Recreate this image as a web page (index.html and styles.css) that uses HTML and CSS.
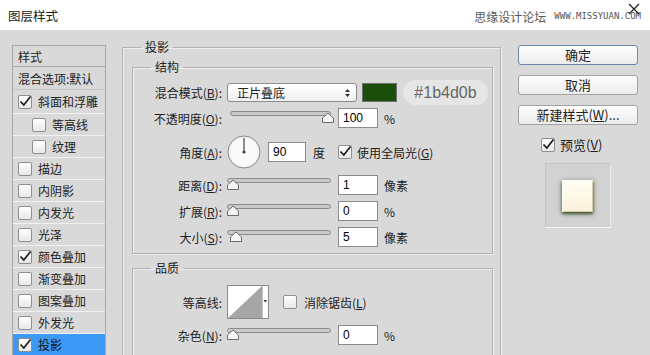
FILE: index.html
```html
<!DOCTYPE html>
<html lang="zh-CN">
<head>
    <meta charset="UTF-8">
    <meta name="viewport" content="width=device-width, initial-scale=1.0">
    <title>图层样式</title>
    <link rel="stylesheet" href="styles.css">
</head>
<body>
    <div class="titlebar">
        <span class="title">图层样式</span>
        <span class="watermark">思缘设计论坛<span class="site">WWW.MISSYUAN.COM</span></span>
        <svg class="close" width="12" height="12" viewBox="0 0 12 12">
            <path d="M1 1 L11 11 M11 1 L1 11" stroke="#222" stroke-width="1.3" fill="none"/>
        </svg>
    </div>

    <div class="dialog">
        <!-- effects list -->
        <ul class="style-list">
            <li class="list-head">样式</li>
            <li class="list-blend">混合选项:默认</li>
            <li class="first"><span class="check"><svg viewBox="0 0 14 14"><path d="M2.5 6.5 L5.8 10 L12.5 1.5"/></svg></span>斜面和浮雕</li>
            <li class="sub"><span class="check"></span>等高线</li>
            <li class="sub"><span class="check"></span>纹理</li>
            <li><span class="check"></span>描边</li>
            <li><span class="check"></span>内阴影</li>
            <li><span class="check"></span>内发光</li>
            <li><span class="check"></span>光泽</li>
            <li><span class="check"><svg viewBox="0 0 14 14"><path d="M2.5 6.5 L5.8 10 L12.5 1.5"/></svg></span>颜色叠加</li>
            <li><span class="check"></span>渐变叠加</li>
            <li><span class="check"></span>图案叠加</li>
            <li><span class="check"></span>外发光</li>
            <li class="selected"><span class="check"><svg viewBox="0 0 14 14"><path d="M2.5 6.5 L5.8 10 L12.5 1.5"/></svg></span>投影</li>
        </ul>

        <!-- drop shadow settings -->
        <div class="main">
            <fieldset class="group outer">
                <legend>投影</legend>

                <fieldset class="group inner structure">
                    <legend>结构</legend>

                    <div class="row row-blend">
                        <label class="lbl">混合模式(<u>B</u>):</label>
                        <div class="select">
                            <span>正片叠底</span>
                            <svg width="7" height="10" viewBox="0 0 7 10"><path d="M1 4 L3.5 1 L6 4 Z M1 6 L3.5 9 L6 6 Z" fill="#333"/></svg>
                        </div>
                        <span class="swatch"></span>
                        <span class="hex">#1b4d0b</span>
                    </div>

                    <div class="row row-slider row-opacity">
                        <label class="lbl">不透明度(<u>O</u>):</label>
                        <svg class="slider" width="108" height="20" viewBox="0 0 108 20">
                            <rect x="3.5" y="3.5" width="100" height="4" rx="2" fill="#c9c9c9" stroke="#8a8a8a"/>
                            <path d="M101 5 L106.5 10 L106.5 14.5 L95.5 14.5 L95.5 10 Z" fill="#f5f5f5" stroke="#6c6c6c"/>
                        </svg>
                        <input class="num" type="text" value="100">
                        <span class="unit">%</span>
                    </div>

                    <div class="row row-angle">
                        <label class="lbl">角度(<u>A</u>):</label>
                        <svg class="dial" width="34" height="34" viewBox="0 0 34 34">
                            <circle cx="17" cy="17" r="16" fill="#f3f3f3" stroke="#8a8a8a"/>
                            <circle cx="17" cy="17" r="14" fill="#fafafa"/>
                            <path d="M17 17 L17 3" stroke="#444" stroke-width="1.2"/>
                            <circle cx="17" cy="17" r="1.6" fill="#444"/>
                        </svg>
                        <input class="num num-angle" type="text" value="90">
                        <span class="unit unit-deg">度</span>
                        <span class="check check-global"><svg viewBox="0 0 14 14"><path d="M2.5 6.5 L5.8 10 L12.5 1.5"/></svg></span>
                        <span>使用全局光(<u>G</u>)</span>
                    </div>

                    <div class="row row-slider">
                        <label class="lbl">距离(<u>D</u>):</label>
                        <svg class="slider" width="108" height="20" viewBox="0 0 108 20">
                            <rect x="0.5" y="3.5" width="103" height="4" rx="2" fill="#c9c9c9" stroke="#8a8a8a"/>
                            <path d="M6 5 L11.5 10 L11.5 14.5 L0.5 14.5 L0.5 10 Z" fill="#f5f5f5" stroke="#6c6c6c"/>
                        </svg>
                        <input class="num" type="text" value="1">
                        <span class="unit">像素</span>
                    </div>

                    <div class="row row-slider">
                        <label class="lbl">扩展(<u>R</u>):</label>
                        <svg class="slider" width="108" height="20" viewBox="0 0 108 20">
                            <rect x="0.5" y="3.5" width="103" height="4" rx="2" fill="#c9c9c9" stroke="#8a8a8a"/>
                            <path d="M6 5 L11.5 10 L11.5 14.5 L0.5 14.5 L0.5 10 Z" fill="#f5f5f5" stroke="#6c6c6c"/>
                        </svg>
                        <input class="num" type="text" value="0">
                        <span class="unit">%</span>
                    </div>

                    <div class="row row-slider">
                        <label class="lbl">大小(<u>S</u>):</label>
                        <svg class="slider" width="108" height="20" viewBox="0 0 108 20">
                            <rect x="0.5" y="3.5" width="103" height="4" rx="2" fill="#c9c9c9" stroke="#8a8a8a"/>
                            <path d="M9 5 L14.5 10 L14.5 14.5 L3.5 14.5 L3.5 10 Z" fill="#f5f5f5" stroke="#6c6c6c"/>
                        </svg>
                        <input class="num" type="text" value="5">
                        <span class="unit">像素</span>
                    </div>
                </fieldset>

                <fieldset class="group inner quality">
                    <legend>品质</legend>

                    <div class="row row-contour">
                        <label class="lbl">等高线:</label>
                        <svg class="contour" width="42" height="34" viewBox="0 0 42 34">
                            <rect x="0.5" y="0.5" width="41" height="33" fill="#fff" stroke="#8a8a8a"/>
                            <path d="M1 33 L35 1 L35 33 Z" fill="#a6a6a6"/>
                            <path d="M35.5 1 L35.5 33" stroke="#c4c4c4"/>
                            <path d="M36.5 15 L40 15 L38.25 17.5 Z" fill="#333"/>
                        </svg>
                        <span class="check check-aa"></span>
                        <span>消除锯齿(<u>L</u>)</span>
                    </div>

                    <div class="row row-slider">
                        <label class="lbl">杂色(<u>N</u>):</label>
                        <svg class="slider" width="108" height="20" viewBox="0 0 108 20">
                            <rect x="0.5" y="3.5" width="103" height="4" rx="2" fill="#c9c9c9" stroke="#8a8a8a"/>
                            <path d="M6 5 L11.5 10 L11.5 14.5 L0.5 14.5 L0.5 10 Z" fill="#f5f5f5" stroke="#6c6c6c"/>
                        </svg>
                        <input class="num" type="text" value="0">
                        <span class="unit">%</span>
                    </div>
                </fieldset>
            </fieldset>
        </div>

        <!-- buttons and preview -->
        <div class="side">
            <button class="btn btn-default">确定</button>
            <button class="btn">取消</button>
            <button class="btn">新建样式(<u>W</u>)...</button>
            <div class="preview-toggle">
                <span class="check"><svg viewBox="0 0 14 14"><path d="M2.5 6.5 L5.8 10 L12.5 1.5"/></svg></span>
                <span>预览(<u>V</u>)</span>
            </div>
            <div class="preview">
                <div class="preview-square"></div>
            </div>
        </div>
    </div>
</body>
</html>
```

FILE: styles.css
```css
/* Layer style dialog */
* {
    box-sizing: border-box;
}
body {
    margin: 0;
    width: 650px;
    height: 355px;
    overflow: hidden;
    background-color: #d9d9d9;
    font-family: "Noto Sans CJK SC", sans-serif;
    font-size: 12px;
    color: #222;
}
u {
    text-decoration-thickness: 1px;
}

/* title bar */
.titlebar {
    position: relative;
    height: 30px;
    background: #fff;
    display: flex;
    align-items: center;
    padding-left: 8px;
}
.title {
    font-size: 12.5px;
    color: #1a1a1a;
}
.watermark {
    margin-left: auto;
    margin-right: 9px;
    display: flex;
    align-items: center;
    font-size: 12px;
    color: #5a5a5a;
    margin-top: 2px;
}
.site {
    font-family: "DejaVu Sans Mono", monospace;
    font-size: 9px;
    margin-left: 8px;
    color: #555;
}
.close {
    position: absolute;
    right: 10px;
    top: 3px;
}

.dialog {
    display: flex;
    align-items: flex-start;
    height: 325px;
}

/* effects list */
.style-list {
    list-style: none;
    margin: 15px 0 0 12px;
    padding: 0;
    width: 94px;
    border: 1px solid #a8a8a8;
    border-bottom: none;
}
.style-list li {
    height: 22px;
    display: flex;
    align-items: center;
    padding-left: 5px;
    border-top: 1px solid #f1f1f1;
    white-space: nowrap;
}
.style-list .list-head {
    height: 20px;
    border-top: none;
}
.style-list .list-blend {
    height: 23px;
    border-top-color: #ababab;
}
.style-list .first {
    height: 24px;
    border-top-color: #c4c4c4;
}
.style-list .sub {
    padding-left: 19px;
}
.style-list .selected {
    background: #3c9af5;
    color: #111;
}

/* checkbox */
.check {
    flex: none;
    width: 14px;
    height: 14px;
    margin-right: 6px;
    border: 1px solid #8e8e8e;
    border-radius: 2px;
    background: linear-gradient(#fff, #e8e8e8);
    display: inline-block;
}
.check svg {
    display: block;
    width: 14px;
    height: 14px;
    margin: -1px 0 0 -1px;
    overflow: visible;
}
.check path {
    fill: none;
    stroke: #1c1c1c;
    stroke-width: 1.7;
}

/* fieldsets */
.main {
    width: 379px;
    margin: 9px 0 0 16px;
}
.group {
    margin: 0;
    min-width: 0;
    border: 1px solid #b3b3b3;
    box-shadow: 1px 1px 0 #ededed, inset 1px 1px 0 #ededed;
}
.group legend {
    padding: 0 4px;
    line-height: 16px;
}
.outer {
    padding: 0 7px 40px 9px;
}
.outer > legend {
    margin-left: 9px;
}
.inner {
    padding: 0;
}
.inner > legend {
    margin-left: 18px;
}
.structure {
    margin-top: 4px;
    padding: 5px 0 6px;
}
.quality {
    margin-top: 6px;
    padding: 9px 0 20px;
}

/* rows */
.row {
    display: flex;
    align-items: center;
    height: 20px;
    margin-top: 6px;
}
.row-blend {
    height: 25px;
    margin-top: 0;
}
.row-opacity {
    margin-top: 3px;
}
.row-angle {
    height: 34px;
    margin-top: 7px;
}
.row-contour {
    height: 34px;
    margin-top: 0;
}
.lbl {
    width: 89px;
    margin-right: 5px;
    text-align: right;
    white-space: nowrap;
}
.select {
    width: 130px;
    height: 19px;
    border: 1px solid #8d8d8d;
    border-radius: 3px;
    background: linear-gradient(#ffffff, #efefef);
    display: flex;
    align-items: center;
    justify-content: space-between;
    padding: 0 5px 0 9px;
}
.swatch {
    width: 35px;
    height: 19px;
    margin-left: 5px;
    background: #1b4d0b;
    border: 1px solid #6f6f6f;
}
.hex {
    width: 85px;
    height: 25px;
    margin-left: 6px;
    border-radius: 13px;
    background: #e6e6e6;
    color: #666;
    font-family: "Liberation Sans", Arial, sans-serif;
    font-size: 16px;
    line-height: 25px;
    text-align: center;
}
.slider {
    flex: none;
    overflow: visible;
}
.num {
    width: 40px;
    height: 20px;
    margin: 0 0 0 3px;
    border: 1px solid #8c8c8c;
    background: #fff;
    padding: 0 0 0 4px;
    font-family: "Liberation Sans", Arial, sans-serif;
    font-size: 12px;
    color: #000;
    outline: none;
}
.unit {
    margin-left: 6px;
}
.dial {
    flex: none;
}
.num-angle {
    width: 38px;
    margin-left: 7px;
}
.unit-deg {
    margin-left: 7px;
}
.check-global {
    margin-left: 13px;
    margin-right: 5px;
}
.contour {
    flex: none;
}
.check-aa {
    margin-left: 14px;
    margin-right: 7px;
}

/* right column */
.side {
    width: 120px;
    margin: 15px 0 0 17px;
}
.btn {
    display: block;
    width: 120px;
    height: 20px;
    margin-bottom: 10px;
    padding: 0;
    border: 1px solid #a2a2a2;
    border-radius: 3px;
    background: linear-gradient(#fefefe, #ececec);
    font-family: inherit;
    font-size: 13px;
    line-height: 18px;
    color: #222;
}
.btn-default {
    border-color: #6c87ab;
}
.preview-toggle {
    display: flex;
    align-items: center;
    padding-left: 23px;
    font-size: 13px;
}
.preview-toggle .check {
    margin-right: 5px;
}
.preview {
    width: 66px;
    height: 65px;
    margin: 9px 0 0 27px;
    padding: 16px;
    background: #d2d2d2;
    border: 1px solid #c4c4c4;
    border-bottom-color: #f4f4f4;
    border-right-color: #ececec;
}
.preview-square {
    width: 31px;
    height: 32px;
    background: linear-gradient(#fffdf4, #fbf2da);
    box-shadow: 0 2px 3px rgba(30, 55, 10, 0.75), 0 1px 6px rgba(30, 55, 10, 0.35), inset 1px 1px 0 #fff, inset -1px -1px 0 #d6cba8;
}
```
